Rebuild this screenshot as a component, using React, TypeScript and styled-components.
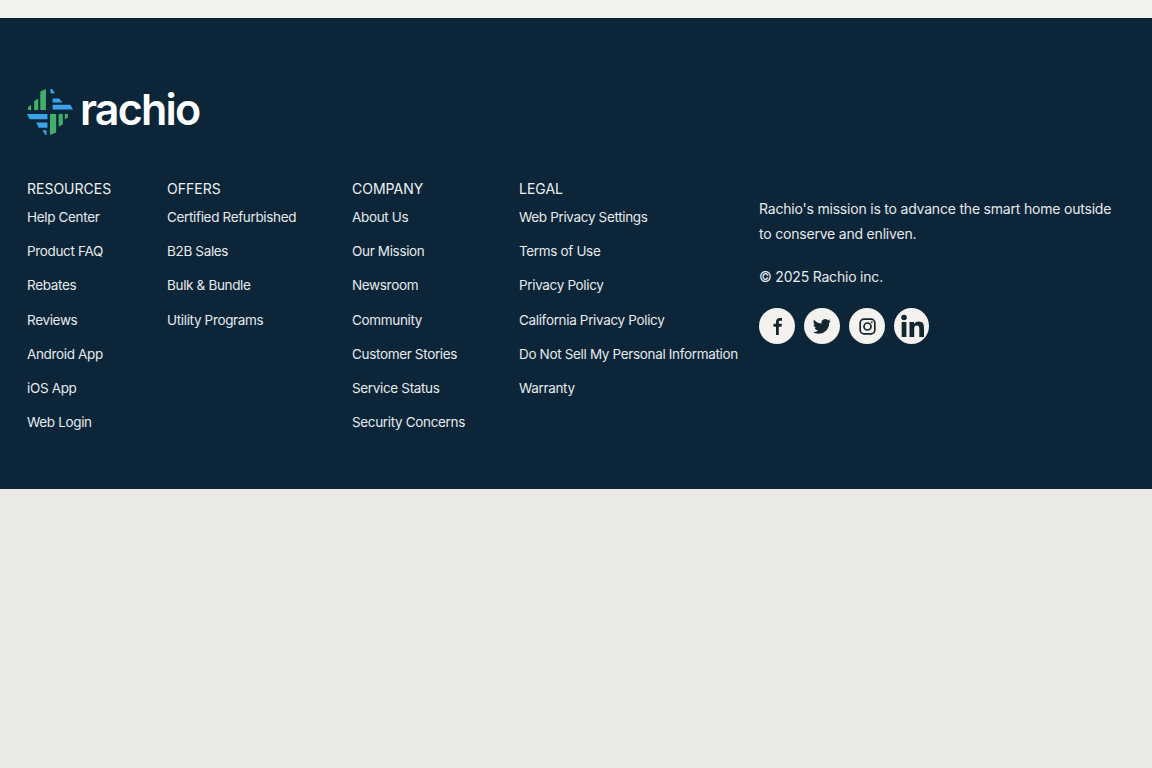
import React from "react";
import styled, { createGlobalStyle } from "styled-components";

const Global = createGlobalStyle`
  html, body { margin: 0; padding: 0; background: #ebe9e5; }
  body { font-family: Inter, "Liberation Sans", sans-serif; }
  a { text-decoration: none; color: inherit; }
`;
const Page = styled.div`
  height: 768px;
  display: flex;
  flex-direction: column;
  background: #ebe9e5;
  overflow: hidden;
`;
const TopStrip = styled.div`
  height: 18px;
  background: #f4f2ee;
  flex: none;
`;
const Footer = styled.footer`
  height: 471px;
  box-sizing: border-box;
  background: #0c2538;
  border-top: 1px solid #0a1c28;
  padding: 70px 27px 0;
  color: #eef1f2;
`;
const LogoRow = styled.div`
  display: flex;
  align-items: center;
  gap: 7px;
  height: 46px;
  margin-bottom: 44px;
`;
const Wordmark = styled.span`
  font-family: Inter, sans-serif;
  font-size: 43px;
  font-weight: 600;
  letter-spacing: -1.8px;
  color: #fff;
  line-height: 46px;
  margin-bottom: 7px;
`;
const Columns = styled.div`
  display: grid;
  grid-template-columns: 140px 185px 167px 240px 1fr;
`;
const Column = styled.div`
  display: flex;
  flex-direction: column;
`;
const Heading = styled.h3`
  margin: 0 0 8px;
  font-size: 14px;
  line-height: 20px;
  font-weight: 400;
  color: #eef1f2;
`;
const LinkItem = styled.a`
  font-size: 13.5px;
  line-height: 20px;
  height: 34.2px;
  letter-spacing: -0.34px;
  color: #e6eaec;
  white-space: nowrap;
`;
const About = styled.div`
  padding-top: 17px;
`;
const Mission = styled.p`
  margin: 0 0 18px;
  font-size: 14px;
  line-height: 25px;
  letter-spacing: -0.2px;
  color: #e6eaec;
`;
const Copy = styled.p`
  margin: 0 0 19px;
  font-size: 14px;
  line-height: 25px;
  letter-spacing: -0.2px;
  color: #e6eaec;
`;
const Socials = styled.div`
  display: flex;
  gap: 9px;
`;
const Social = styled.a<{ $narrow?: boolean }>`
  width: ${(p) => (p.$narrow ? "35px" : "36px")};
  height: 36px;
  border-radius: 50%;
  background: #f4f2ee;
  display: flex;
  align-items: center;
  justify-content: center;
  overflow: hidden;
  color: #15262f;
`;

const Logo = () => (
  <svg width="46" height="46" viewBox="0 0 45 44" preserveAspectRatio="none">
    <g fill="#3fb06a">
      <path d="M1 20v-2.500l3-2.500v5z" />
      <path d="M7 20v-8.500l4-2.500v11z" />
      <path d="M13 20V2.500l5.500-2.500V20z" />
      <path d="M22.500 44V24H28.500v17.500z" />
      <path d="M31 36V24h4v10z" />
      <path d="M37 29V24h3v3.500z" />
    </g>
    <g fill="#3aa3ea">
      <path d="M23 0h1.500l3 4H23z" />
      <path d="M25 9h6.500l3 4H25z" />
      <path d="M25 15h17.500l2.500 4.500H25z" />
      <path d="M0 24h20v5H2.500z" />
      <path d="M9 32h11v5h-8.500z" />
      <path d="M15 39.500h4v4.500h-1z" />
    </g>
  </svg>
);

const Fb = () => (
  <svg width="20" height="20" viewBox="0 0 20 20" fill="currentColor">
    <path d="M11.800 19V10.800h2.700l.4-3h-3.100V6.100c0-.9.300-1.400 1.500-1.400h1.700V2c-.4 0-1.300-.1-2.200-.1-2.300 0-3.800 1.300-3.800 3.800v2.100H6.500v3h2.500V19z" />
  </svg>
);
const Tw = () => (
  <svg width="18" height="18" viewBox="0 0 24 24" fill="currentColor">
    <path d="M23.500 4.900c-.9.400-1.800.600-2.800.800 1-.6 1.800-1.500 2.100-2.700-.9.600-2 1-3.100 1.200A4.900 4.900 0 0 0 11.400 8.700C7.400 8.500 3.800 6.600 1.400 3.600c-1.300 2.200-.7 5.100 1.500 6.600-.8 0-1.600-.2-2.200-.6 0 2.300 1.600 4.400 3.900 4.900-.7.200-1.500.2-2.200.1.600 2 2.500 3.400 4.600 3.400A9.900 9.900 0 0 1 0 20c2.200 1.400 4.800 2.200 7.500 2.200 9.100 0 14.300-7.700 14-14.600 1-.7 1.800-1.600 2-2.700z" />
  </svg>
);
const Ig = () => (
  <svg width="19" height="19" viewBox="0 0 20 20" fill="none" stroke="currentColor" strokeWidth="1.800">
    <rect x="2.300" y="2.300" width="15.400" height="15.400" rx="4" />
    <circle cx="10" cy="10" r="3.700" />
    <circle cx="14.500" cy="5.500" r=".6" fill="currentColor" strokeWidth=".8" />
  </svg>
);
const Li = () => (
  <svg width="26" height="26" viewBox="0 0 26 26" fill="currentColor">
    <circle cx="5" cy="4.500" r="2.800" />
    <rect x="2.700" y="9" width="4.700" height="15" />
    <path d="M10.500 9h4.500v2.100c.8-1.400 2.500-2.500 4.700-2.500 4.400 0 5.300 2.800 5.300 6.500V24h-4.700v-7.900c0-1.900-.1-3.700-2.400-3.700-2.300 0-2.700 1.700-2.700 3.600v8h-4.700z" />
  </svg>
);

const columns: { title: string; links: string[] }[] = [
  { title: "RESOURCES", links: ["Help Center", "Product FAQ", "Rebates", "Reviews", "Android App", "iOS App", "Web Login"] },
  { title: "OFFERS", links: ["Certified Refurbished", "B2B Sales", "Bulk & Bundle", "Utility Programs"] },
  { title: "COMPANY", links: ["About Us", "Our Mission", "Newsroom", "Community", "Customer Stories", "Service Status", "Security Concerns"] },
  { title: "LEGAL", links: ["Web Privacy Settings", "Terms of Use", "Privacy Policy", "California Privacy Policy", "Do Not Sell My Personal Information", "Warranty"] },
];

export default function App() {
  return (
    <Page>
      <Global />
      <TopStrip />
      <Footer>
        <LogoRow>
          <Logo />
          <Wordmark>rachio</Wordmark>
        </LogoRow>
        <Columns>
          {columns.map((c) => (
            <Column key={c.title}>
              <Heading>{c.title}</Heading>
              {c.links.map((l) => (
                <LinkItem key={l} href="#">{l}</LinkItem>
              ))}
            </Column>
          ))}
          <About>
            <Mission>Rachio's mission is to advance the smart home outside to conserve and enliven.</Mission>
            <Copy>© 2025 Rachio inc.</Copy>
            <Socials>
              <Social href="#" aria-label="Facebook"><Fb /></Social>
              <Social href="#" aria-label="Twitter"><Tw /></Social>
              <Social href="#" aria-label="Instagram"><Ig /></Social>
              <Social href="#" aria-label="LinkedIn" $narrow><Li /></Social>
            </Socials>
          </About>
        </Columns>
      </Footer>
    </Page>
  );
}
